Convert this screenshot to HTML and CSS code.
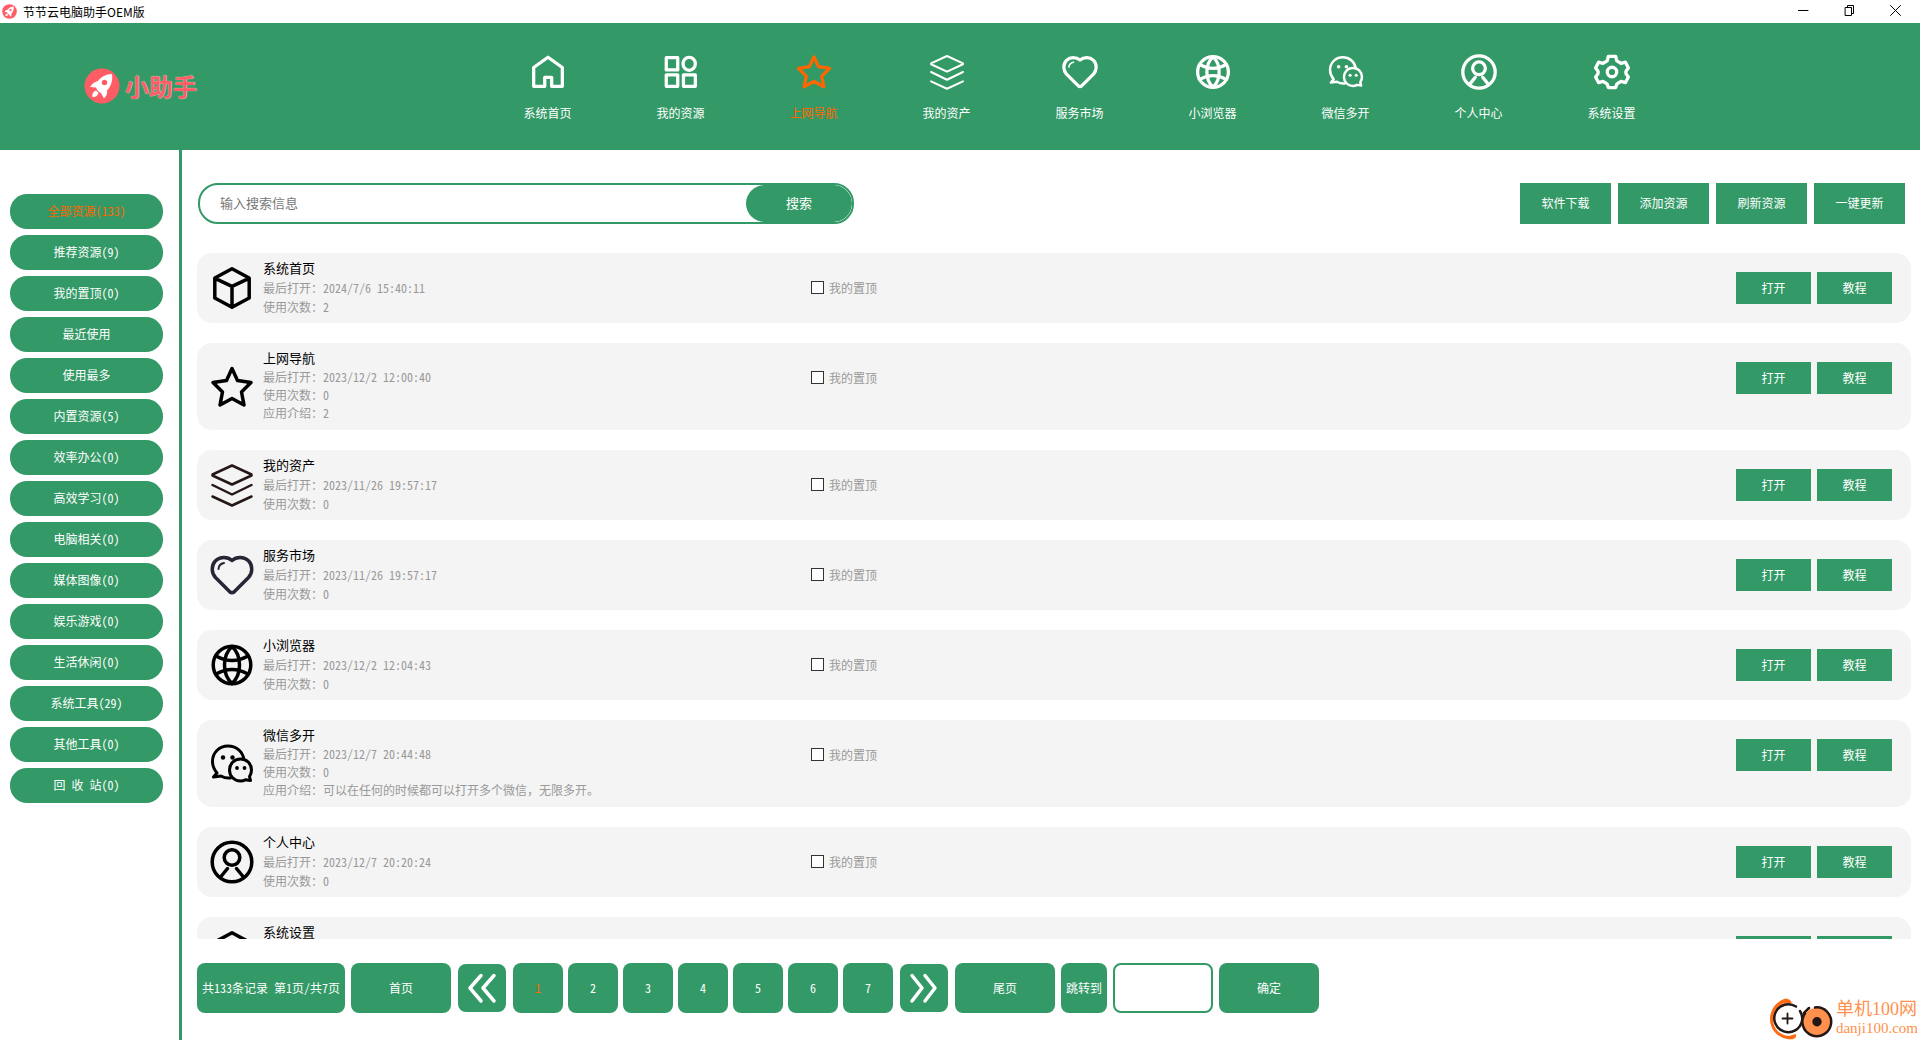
FILE: index.html
```html
<!DOCTYPE html>
<html lang="zh-CN">
<head>
<meta charset="utf-8">
<title>节节云电脑助手OEM版</title>
<link rel="stylesheet" href="styles.css">
</head>
<body>
<svg class="sprite" aria-hidden="true">
  <symbol id="home" viewBox="0 0 44 44"><path d="M4.500 16.500 22 4l17.500 12.500v23h-13V28.500h-8.500v11H4.500z"/></symbol>
  <symbol id="grid" viewBox="0 0 44 44"><path d="M4 4.500h14v15H4zM4 25.500h14v14H4zM25 25.500h14.500v14H25z"/><ellipse cx="32" cy="12" rx="7.500" ry="8"/></symbol>
  <symbol id="star" viewBox="0 0 44 44"><path d="M22 3.500 27.500 15.500 41 17.500 31.500 27 34 40 22 33.500 10 40l2.500-13L3 17.500l13.500-2z"/></symbol>
  <symbol id="layers" viewBox="0 0 44 44"><path stroke-width="2.500" d="m22 2.500 19.500 9v1L22 21.500 2.500 12.500v-1zM2.500 22 22 31.500 41.500 22M2.500 33.500l19.500 9 19.500-9"/></symbol>
  <symbol id="heart" viewBox="0 0 44 44"><path d="M22 7.500C17.500 3.500 10 3.500 5.500 7.800 1 12.500 1.300 20 5.500 24.500l14.500 14.500q2 1.500 4 0l14.500-14.500C42.700 20 43 12.500 38.500 7.800 34 3.500 26.500 3.500 22 7.500z"/><path stroke-width="2" d="M8.500 16q.2-5 5.500-6"/></symbol>
  <symbol id="globe" viewBox="0 0 44 44"><circle cx="22" cy="22" r="18.800"/><path d="M22 3.500c-10 9-10 28 0 37M22 3.500c10 9 10 28 0 37M6 13q16 9 32 0M6 31q16-9 32 0"/></symbol>
  <symbol id="wechat" viewBox="0 0 44 44"><path stroke-width="3" d="M34 17.500C32.500 9 26 4 18 4 9 4 2.500 11 2.500 19.500c0 5 2 8.500 4.500 11.500l-3.500 4 7.500-1c3 1.800 6 2.300 9.500 2"/><path stroke-width="3" d="M30.500 17c-6.500 0-11 5-11 11s4.500 11 11 11c2 0 3.500-.4 5-1.300l5 .8-1-4c1.300-2 2-4 2-6.500 0-6-4.500-11-11-11z"/><g fill="currentColor" stroke="none"><circle cx="13" cy="15.500" r="2.200"/><circle cx="22.500" cy="15.500" r="2.200"/><circle cx="27" cy="26" r="1.900"/><circle cx="34.500" cy="26" r="1.900"/></g></symbol>
  <symbol id="person" viewBox="0 0 44 44"><circle cx="22" cy="22" r="19.800"/><circle cx="22" cy="17.500" r="7.800"/><path d="m17.500 28.500-6.500 8M26.500 28.500l6.500 8"/></symbol>
  <symbol id="gear" viewBox="0 0 44 44"><path d="M17.500 3h9l1.500 5.500 5 3 5.500-1.500 3.500 7-3 4v3l3 4-3.500 7-5.500-1.500-5 3-1.500 4.500h-9L16 36.500l-5-3L5.500 35 2 28l3-4v-3l-3-4 3.500-7L11 11.500l5-3z"/><circle cx="22" cy="22" r="5.800"/></symbol>
  <symbol id="cube" viewBox="0 0 44 44"><path d="M22 2.800 39.200 12v20L22 41.200 4.800 32V12zM5 12.300l17 8 17-8M22 20.500V41"/></symbol>
  <symbol id="rocket" viewBox="0 0 36 36"><circle cx="18" cy="18" r="17.500" fill="#ff5c66" stroke="none"/><path fill="#fff" stroke="none" d="M28 6c-6 0-11 3-14 7-3 .5-6 2.500-8 6l6 .5c1 3 3 4.500 5 5.500l3 5.500c2.500-2.500 3.500-5 3-8 4-4 6-10 5-16.500zM12 22.500c-3 1-4 3-3.500 6.500 3 .5 5-1 6-4z"/><circle cx="20.500" cy="14.500" r="2.700" fill="#ff5c66" stroke="none"/></symbol>
</svg>

<div class="app">
  <div class="titlebar">
    <svg class="title-icon"><use href="#rocket"/></svg>
    <span>节节云电脑助手OEM版</span>
    <div class="window-controls">
      <button type="button" aria-label="最小化"><svg viewBox="0 0 11 11"><path d="M0 5.500h10"/></svg></button>
      <button type="button" aria-label="还原"><svg viewBox="0 0 11 11"><path d="M1.500 2.500h6v8h-6zM3.500 2.500v-2h6v8h-2"/></svg></button>
      <button type="button" aria-label="关闭"><svg viewBox="0 0 11 11"><path d="m.5.500 10 10m0-10-10 10"/></svg></button>
    </div>
  </div>

  <header class="header">
    <div class="brand"><svg class="brand-icon"><use href="#rocket"/></svg><span>小助手</span></div>
    <nav class="nav">
      <a href="#"><svg><use href="#home"/></svg>系统首页</a>
      <a href="#"><svg><use href="#grid"/></svg>我的资源</a>
      <a href="#" class="active"><svg><use href="#star"/></svg>上网导航</a>
      <a href="#"><svg><use href="#layers"/></svg>我的资产</a>
      <a href="#"><svg><use href="#heart"/></svg>服务市场</a>
      <a href="#"><svg><use href="#globe"/></svg>小浏览器</a>
      <a href="#"><svg><use href="#wechat"/></svg>微信多开</a>
      <a href="#"><svg><use href="#person"/></svg>个人中心</a>
      <a href="#"><svg><use href="#gear"/></svg>系统设置</a>
    </nav>
  </header>

  <div class="body">
    <aside class="sidebar">
      <button type="button" class="active">全部资源(133)</button>
      <button type="button">推荐资源(9)</button>
      <button type="button">我的置顶(0)</button>
      <button type="button">最近使用</button>
      <button type="button">使用最多</button>
      <button type="button">内置资源(5)</button>
      <button type="button">效率办公(0)</button>
      <button type="button">高效学习(0)</button>
      <button type="button">电脑相关(0)</button>
      <button type="button">媒体图像(0)</button>
      <button type="button">娱乐游戏(0)</button>
      <button type="button">生活休闲(0)</button>
      <button type="button">系统工具(29)</button>
      <button type="button">其他工具(0)</button>
      <button type="button">回 收 站(0)</button>
    </aside>

    <main class="main">
      <div class="toolbar">
        <form class="search">
          <input type="text" placeholder="输入搜索信息" aria-label="输入搜索信息">
          <button type="button">搜索</button>
        </form>
        <div class="tools">
          <button type="button">软件下载</button>
          <button type="button">添加资源</button>
          <button type="button">刷新资源</button>
          <button type="button">一键更新</button>
        </div>
      </div>

      <div class="list">
        <article class="card">
          <svg class="card-icon"><use href="#cube"/></svg>
          <div class="info"><h2>系统首页</h2><p>最后打开：2024/7/6 15:40:11</p><p>使用次数：2</p></div>
          <label class="pin"><input type="checkbox">我的置顶</label>
          <div class="actions"><button type="button">打开</button><button type="button">教程</button></div>
        </article>
        <article class="card tall">
          <svg class="card-icon"><use href="#star"/></svg>
          <div class="info"><h2>上网导航</h2><p>最后打开：2023/12/2 12:00:40</p><p>使用次数：0</p><p>应用介绍：2</p></div>
          <label class="pin"><input type="checkbox">我的置顶</label>
          <div class="actions"><button type="button">打开</button><button type="button">教程</button></div>
        </article>
        <article class="card">
          <svg class="card-icon brown"><use href="#layers"/></svg>
          <div class="info"><h2>我的资产</h2><p>最后打开：2023/11/26 19:57:17</p><p>使用次数：0</p></div>
          <label class="pin"><input type="checkbox">我的置顶</label>
          <div class="actions"><button type="button">打开</button><button type="button">教程</button></div>
        </article>
        <article class="card">
          <svg class="card-icon navy"><use href="#heart"/></svg>
          <div class="info"><h2>服务市场</h2><p>最后打开：2023/11/26 19:57:17</p><p>使用次数：0</p></div>
          <label class="pin"><input type="checkbox">我的置顶</label>
          <div class="actions"><button type="button">打开</button><button type="button">教程</button></div>
        </article>
        <article class="card">
          <svg class="card-icon"><use href="#globe"/></svg>
          <div class="info"><h2>小浏览器</h2><p>最后打开：2023/12/2 12:04:43</p><p>使用次数：0</p></div>
          <label class="pin"><input type="checkbox">我的置顶</label>
          <div class="actions"><button type="button">打开</button><button type="button">教程</button></div>
        </article>
        <article class="card tall">
          <svg class="card-icon"><use href="#wechat"/></svg>
          <div class="info"><h2>微信多开</h2><p>最后打开：2023/12/7 20:44:48</p><p>使用次数：0</p><p class="prose">应用介绍：可以在任何的时候都可以打开多个微信，无限多开。</p></div>
          <label class="pin"><input type="checkbox">我的置顶</label>
          <div class="actions"><button type="button">打开</button><button type="button">教程</button></div>
        </article>
        <article class="card">
          <svg class="card-icon"><use href="#person"/></svg>
          <div class="info"><h2>个人中心</h2><p>最后打开：2023/12/7 20:20:24</p><p>使用次数：0</p></div>
          <label class="pin"><input type="checkbox">我的置顶</label>
          <div class="actions"><button type="button">打开</button><button type="button">教程</button></div>
        </article>
        <article class="card">
          <svg class="card-icon"><use href="#cube"/></svg>
          <div class="info"><h2>系统设置</h2></div>
          <div></div>
          <div class="actions"><button type="button" aria-label="打开"></button><button type="button" aria-label="教程"></button></div>
        </article>
      </div>

      <div class="pager">
        <span class="summary">共133条记录 第1页/共7页</span>
        <button type="button" class="wide">首页</button>
        <button type="button" class="step" aria-label="上一页"><svg viewBox="0 0 48 48"><path d="M23 11.500 12 24l11 13M36 11.500 25 24l11 13"/></svg></button>
        <div class="pages">
          <button type="button" class="active">1</button>
          <button type="button">2</button>
          <button type="button">3</button>
          <button type="button">4</button>
          <button type="button">5</button>
          <button type="button">6</button>
          <button type="button">7</button>
        </div>
        <button type="button" class="step" aria-label="下一页"><svg viewBox="0 0 48 48"><path d="M12 11.500 22 24 12 37M25 11.500 35 24 25 37"/></svg></button>
        <button type="button" class="wide">尾页</button>
        <label class="jump" for="page-number">跳转到</label>
        <input type="text" id="page-number">
        <button type="button" class="wide">确定</button>
      </div>
    </main>
  </div>

  <div class="site-mark">
    <svg viewBox="0 0 64 42">
      <path fill="#ff6a10" d="M22 5.500C24 4 20 0 15 1 7 4 1 12 1 21c0 10 7 18 17 20 5 1 10 0 9-5l-7 2C10 37 4 30 4 21 4 14 8 8 14 5.500z"/>
      <path fill="none" stroke="#231815" stroke-width="2.500" d="M27 8.500A14 14 0 1 0 33 23q1-5-2-10M35 15l5-5"/>
      <path fill="none" stroke="#231815" stroke-width="1.800" d="M18.500 15.500v10M13.500 20.500h10"/>
      <circle cx="48" cy="23.700" r="14" fill="#ff914d"/>
      <path fill="none" stroke="#231815" stroke-width="2.500" d="M46 9.500a14.400 14.400 0 1 1-10 6"/>
      <circle cx="48" cy="23.700" r="4.700" fill="#231815"/>
    </svg>
    <div><div class="mark-name">单机100网</div><div class="mark-url">danji100.com</div></div>
  </div>
</div>
</body>
</html>
```
FILE: styles.css
```css
:root {
  --green: #339966;
  --orange: #ff6600;
}

* {
  box-sizing: border-box;
}

body {
  margin: 0;
  font-family: "Noto Sans CJK SC", sans-serif;
  font-size: 12px;
  font-feature-settings: "hwid";
  background: #fff;
}

button,
input {
  font: inherit;
  font-feature-settings: inherit;
}

button {
  padding: 0 0 2px;
  border: 0;
  color: #fff;
  background: var(--green);
  cursor: pointer;
}

svg {
  display: block;
  fill: none;
  stroke: currentColor;
  stroke-width: 3.5;
  stroke-linejoin: round;
  stroke-linecap: round;
}

.sprite {
  position: absolute;
  width: 0;
  height: 0;
}

.app {
  display: flex;
  flex-direction: column;
  height: 100vh;
  overflow: hidden;
}

.titlebar {
  display: flex;
  align-items: center;
  flex: none;
  height: 23px;
  padding: 0 2px 1px;
  font-feature-settings: normal;
}

.title-icon {
  width: 15px;
  height: 15px;
  margin-right: 6px;
}

.window-controls {
  display: flex;
  align-self: stretch;
  margin-left: auto;
}

.window-controls button {
  display: flex;
  align-items: center;
  justify-content: center;
  width: 46px;
  color: #000;
  background: none;
}

.window-controls svg {
  width: 11px;
  height: 11px;
  stroke-width: 1;
  stroke-linejoin: miter;
}

.header {
  display: flex;
  flex: none;
  height: 127px;
  color: #fff;
  background: var(--green);
}

.brand {
  display: flex;
  align-items: center;
  gap: 5px;
  flex: 0 0 25%;
  padding: 0 0 2px 84px;
  color: #ff5c66;
  font-size: 24px;
  font-weight: 700;
  text-shadow: 0 0 1px #fff;
}

.brand-icon {
  width: 36px;
  height: 36px;
}

.nav {
  display: flex;
  margin-left: 1px;
}

.nav a {
  display: flex;
  flex-direction: column;
  align-items: center;
  gap: 14px;
  width: 133px;
  padding-top: 31px;
  color: inherit;
  line-height: 18px;
  text-decoration: none;
}

.nav svg {
  width: 36px;
  height: 36px;
  stroke-width: 4;
}

.nav a.active,
.sidebar .active,
.pages .active {
  color: var(--orange);
}

.body {
  display: flex;
  flex: 1;
  min-height: 0;
}

.sidebar {
  display: flex;
  flex-direction: column;
  gap: 6px;
  flex: none;
  width: 182px;
  padding: 44px 16px 0 10px;
  border-right: 3px solid var(--green);
}

.sidebar button {
  height: 35px;
  border-radius: 17px;
}

.main {
  display: flex;
  flex-direction: column;
  flex: 1;
  min-width: 0;
  padding: 33px 9px 27px 15px;
}

.toolbar {
  display: flex;
  justify-content: space-between;
  flex: none;
  height: 41px;
  margin-bottom: 29px;
  padding: 0 6px 0 1px;
}

.search {
  display: flex;
  width: 656px;
  border: 2px solid var(--green);
  border-radius: 20px;
  overflow: hidden;
  font-size: 13px;
}

.search input {
  flex: 1;
  min-width: 0;
  padding: 0 20px 2px;
  border: 0;
  outline: 0;
  background: none;
}

.search input::placeholder {
  color: #777;
}

.search button {
  width: 106px;
  border-radius: 19px;
}

.tools {
  display: flex;
  gap: 7px;
}

.tools button {
  width: 91px;
}

.list {
  display: flex;
  flex-direction: column;
  gap: 20px;
  flex: 1;
  min-height: 0;
  margin-bottom: 24px;
  overflow: hidden;
}

.card {
  display: grid;
  grid-template-columns: 44px minmax(0, 539px) 1fr auto;
  column-gap: 9px;
  flex: none;
  min-height: 70px;
  padding: 0 19px 0 13px;
  border-radius: 15px;
  background: #f4f4f4;
}

.card-icon {
  align-self: center;
  width: 44px;
  height: 44px;
  color: #000;
}

.brown {
  color: #231815;
}

.navy {
  color: #272636;
}

.info {
  padding: 5px 0 7px;
  color: #999;
  line-height: 19px;
}

.tall .info {
  padding-bottom: 8px;
  line-height: 18px;
}

.info h2,
.info p {
  margin: 0;
}

.info h2 {
  color: #000;
  font-size: 13px;
  font-weight: 400;
  line-height: 20px;
}

.prose {
  font-feature-settings: normal;
}

.pin {
  display: flex;
  align-items: center;
  gap: 5px;
  height: 32px;
  margin-top: 18px;
  color: #999;
}

.pin input {
  width: 13px;
  height: 13px;
  margin: 0;
  border: 1px solid #333;
  background: #fff;
  appearance: none;
}

.actions {
  display: flex;
  gap: 6px;
  height: 32px;
  margin-top: 19px;
}

.actions button {
  width: 75px;
}

.pager {
  display: flex;
  align-items: center;
  gap: 6px;
  flex: none;
}

.pager button,
.summary,
.jump {
  display: flex;
  align-items: center;
  justify-content: center;
  height: 50px;
  padding-bottom: 2px;
  border-radius: 8px;
  color: #fff;
  background: var(--green);
}

.summary {
  width: 148px;
}

.pager .wide,
.pager input {
  width: 100px;
}

.pager .step {
  width: 48px;
  height: 48px;
  margin: 0 1px;
  padding: 0;
}

.step svg {
  width: 48px;
  height: 48px;
}

.pages {
  display: flex;
  gap: 5px;
}

.pages button {
  width: 50px;
}

.pager .pages .active {
  color: var(--orange);
}

.jump {
  width: 46px;
}

.pager input {
  height: 50px;
  padding: 0 8px;
  border: 2px solid var(--green);
  border-radius: 8px;
}

.site-mark {
  position: absolute;
  right: 2px;
  bottom: 0;
  display: flex;
  gap: 3px;
  color: #ff914d;
  font-family: "Liberation Serif", "Noto Sans CJK SC", serif;
  font-feature-settings: normal;
}

.site-mark svg {
  width: 64px;
  height: 42px;
  stroke: none;
}

.mark-name {
  font-size: 18px;
  line-height: 22px;
}

.mark-url {
  font-size: 15px;
  line-height: 16px;
}
```
